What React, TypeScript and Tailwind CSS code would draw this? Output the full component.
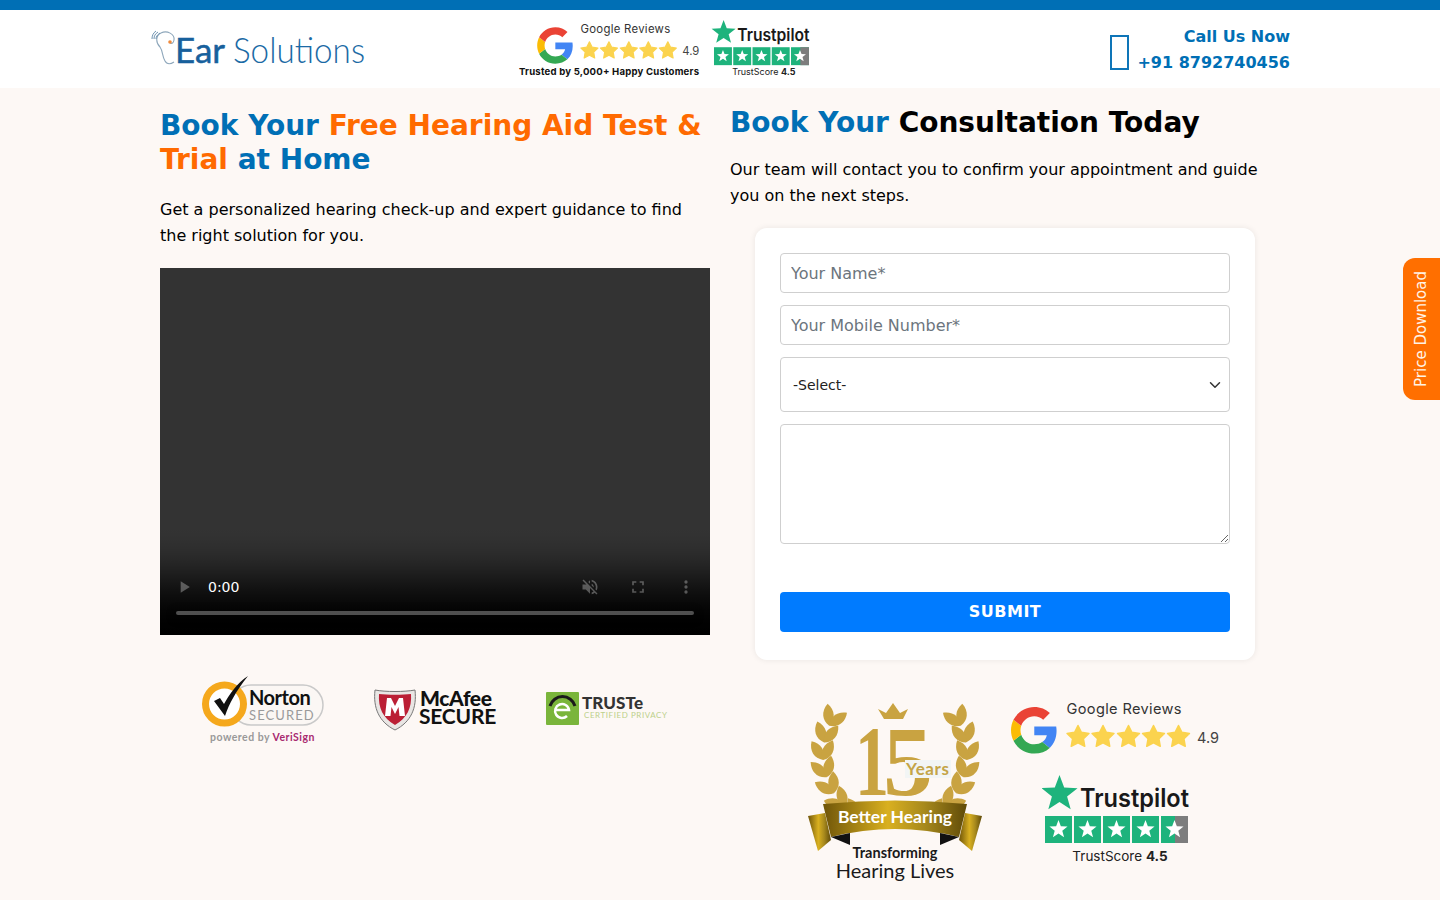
import { ChevronDown } from "lucide-react";

const star = (cx: number, cy: number, r: number, inner = 0.42) => {
  const pts: string[] = [];
  for (let i = 0; i < 10; i++) {
    const rad = i % 2 === 0 ? r : r * inner;
    const a = -Math.PI / 2 + (i * Math.PI) / 5;
    pts.push(`${(cx + rad * Math.cos(a)).toFixed(2)},${(cy + rad * Math.sin(a)).toFixed(2)}`);
  }
  return pts.join(" ");
};

function GoogleMark() {
  return (
    <g fontFamily="Inter, 'Open Sans', sans-serif">
      <g transform="translate(6,12) scale(0.97)">
        <path fill="#4285F4" d="M46.98 24.55c0-1.57-.15-3.09-.38-4.55H24v9.02h12.94c-.58 2.96-2.26 5.48-4.78 7.18l7.73 6c4.51-4.18 7.09-10.36 7.09-17.65z" />
        <path fill="#34A853" d="M24 48c6.48 0 11.93-2.13 15.89-5.81l-7.73-6c-2.15 1.45-4.92 2.3-8.16 2.3-6.26 0-11.57-4.22-13.47-9.91l-7.98 6.19C6.51 42.62 14.62 48 24 48z" />
        <path fill="#FBBC05" d="M10.53 28.59c-.48-1.45-.76-2.99-.76-4.59s.27-3.14.76-4.59l-7.98-6.19C.92 16.46 0 20.12 0 24s.92 7.54 2.56 10.78l7.97-6.19z" />
        <path fill="#EA4335" d="M24 9.5c3.54 0 6.71 1.22 9.21 3.6l6.85-6.85C35.9 2.38 30.47 0 24 0 14.62 0 6.51 5.38 2.56 13.22l7.98 6.19C12.43 13.72 17.74 9.5 24 9.5z" />
      </g>
      <text x="61.500" y="19" fontSize="14.600" fill="#333" textLength="115">Google Reviews</text>
      {[73, 98, 123.5, 148.5, 173.5].map((x) => (
        <polygon key={x} points={star(x, 42, 11.5, 0.5)} fill="#fbd34e" stroke="#fbd34e" strokeWidth="1.500" strokeLinejoin="round" />
      ))}
      <text x="192" y="47.500" fontSize="14.500" fill="#444">4.9</text>
    </g>
  );
}

function TrustMark({ scoreY = 86 }: { scoreY?: number }) {
  return (
    <g fontFamily="Inter, sans-serif">
      <polygon points={star(17.5, 19, 19)} fill="#1eb37c" />
      <text x="38" y="32" fontSize="25.500" fontWeight="600" textLength="109" lengthAdjust="spacingAndGlyphs" fill="#191919">Trustpilot</text>
      {[3, 32, 61, 90, 119].map((x, i) => (
        <g key={x}>
          <rect x={x} y="41" width="27" height="27" fill="#1eb37c" />
          {i === 4 && <rect x={x + 14} y="41" width="13" height="27" fill="#7d7d7d" />}
          <polygon points={star(x + 13.5, 54.5, 9.5)} fill="#fff" />
        </g>
      ))}
      <text x="78" y={scoreY} textAnchor="middle" fontSize="13.500" fill="#222">
        TrustScore <tspan fontWeight="700">4.5</tspan>
      </text>
    </g>
  );
}

function Logo() {
  return (
    <svg viewBox="0 0 232 48" className="h-[48px] w-[232px] shrink-0" fontFamily="Lato, sans-serif">
      <g transform="translate(0,4)">
        <path d="M11 4 C5 7 6 14 10 18 C13 22 12 27 15 32 C17 36 21 35 24 33" fill="none" stroke="#8ea7bb" strokeWidth="1.100" />
        <path d="M11 4 C17 1 25 5 24 11 C23.500 14 22 15 20 14" fill="none" stroke="#8ea7bb" strokeWidth="1.100" />
        <path d="M8 3 C5 5 4 7 4 10 M6 2 C3 4 2 7 2 10 M10 4 C7 6 6 8 6 10" fill="none" stroke="#6f93b0" strokeWidth="1" />
        <circle cx="20" cy="13" r="1.800" fill="#f08a3c" />
        <text x="25" y="34" fontSize="35" fill="#17609c" fontWeight="400" textLength="50" lengthAdjust="spacingAndGlyphs" stroke="#17609c" strokeWidth="0.5">Ear</text>
        <text x="83" y="34" fontSize="35" fill="#1b6aa5" fontWeight="300" textLength="132" lengthAdjust="spacingAndGlyphs">Solutions</text>
      </g>
    </svg>
  );
}

function Norton() {
  return (
    <svg viewBox="0 0 125 72" className="h-[72px] w-[125px]" fontFamily="Lato, sans-serif">
      <rect x="30" y="12" width="92" height="40" rx="20" fill="#fbf7f4" stroke="#c9c9c9" strokeWidth="1.500" />
      <circle cx="23.500" cy="31" r="19" fill="#fff" stroke="#f5a81c" strokeWidth="7" />
      <path d="M13 28 L24 43 C28 31 35 18 47 3 C36 10 28 22 23 31 L19 25 Z" fill="#111" />
      <text x="48" y="32" fontSize="20" fontWeight="700" fill="#111" letterSpacing="-0.5">Norton</text>
      <text x="48" y="46.500" fontSize="13" fill="#9a9a9a" letterSpacing="1.100">SECURED</text>
      <text x="9" y="68" fontSize="10.500" fontWeight="700" fill="#999" letterSpacing="0.5">
        powered by <tspan fill="#a8296f">VeriSign</tspan>
      </text>
    </svg>
  );
}

function McAfee() {
  return (
    <svg viewBox="0 0 125 46" className="h-[46px] w-[125px]" fontFamily="Lato, sans-serif">
      <path d="M2 4 C12 6 32 6 42 4 C44 22 38 36 22 44 C6 36 0 22 2 4 Z" fill="#e9e6e4" stroke="#777" strokeWidth="1" />
      <path d="M6 8 C14 9 30 9 38 8 C39 22 34 32 22 39 C10 32 5 22 6 8 Z" fill="#bb1f35" />
      <path d="M12 30 L14 12 L18 12 L22 20 L26 12 L30 12 L32 30 L26.500 30 L25.500 21 L22 28 L18.500 21 L17.500 30 Z" fill="#fff" />
      <text x="47" y="20" fontSize="21" fontWeight="900" fill="#111" letterSpacing="-0.4">McAfee</text>
      <text x="46" y="38" fontSize="21" fontWeight="700" fill="#111" letterSpacing="-0.2">SECURE</text>
    </svg>
  );
}

function Truste() {
  return (
    <svg viewBox="0 0 125 36" className="h-[36px] w-[125px]" fontFamily="Lato, sans-serif">
      <rect x="1" y="1" width="33" height="33" rx="1" fill="#7ab53b" />
      <path d="M5 15 A13 13 0 0 1 30 15" fill="none" stroke="#1a1a1a" strokeWidth="3" />
      <path d="M11 19 H24 A7 7 0 1 0 22 25" fill="none" stroke="#fff" strokeWidth="2.500" />
      <text x="37" y="18" fontSize="17" fontWeight="900" fill="#333" textLength="61">TRUSTe</text>
      <text x="39" y="27" fontSize="8" fill="#bcd08a" textLength="83">CERTIFIED PRIVACY</text>
    </svg>
  );
}

const LEAF = "M0 0 C6 -7 15 -7 22 0 C15 7 6 7 0 0 Z";
const nodes = [66, 80, 94, 108, 122, 136, 150];

function Wreath() {
  return (
    <>
      {nodes.map((t) => {
        const r = (t * Math.PI) / 180;
        const x = 100 - 72 * Math.sin(r);
        const y = 65 - 72 * Math.cos(r);
        return (
          <g key={t}>
            <path transform={`translate(${x.toFixed(1)},${y.toFixed(1)}) rotate(${-t - 28})`} d={LEAF} fill="#c9a341" />
            <path transform={`translate(${x.toFixed(1)},${y.toFixed(1)}) rotate(${-t + 30})`} d={LEAF} fill="#c9a341" />
          </g>
        );
      })}
    </>
  );
}

function Badge() {
  return (
    <svg viewBox="0 0 200 200" className="h-[200px] w-[200px] shrink-0" fontFamily="Lato, sans-serif">
      <defs>
        <linearGradient id="band" x1="0" y1="0" x2="1" y2="0">
          <stop offset="0" stopColor="#6f5509" />
          <stop offset="0.45" stopColor="#d9b020" />
          <stop offset="0.7" stopColor="#a88a1d" />
          <stop offset="1" stopColor="#5f4a08" />
        </linearGradient>
      </defs>
      <Wreath />
      <g transform="translate(200,0) scale(-1,1)"><Wreath /></g>
      <path d="M83 19 L89 29 H108 L113 19 L105 23 L98 13 L91 23 Z" fill="#c9a341" />
      <text x="60" y="105" fontSize="100" fontWeight="700" fill="#c9a341" fontFamily="'Liberation Serif', serif" textLength="34" lengthAdjust="spacingAndGlyphs">1</text>
      <text x="88" y="105" fontSize="100" fontWeight="700" fill="#c9a341" fontFamily="'Liberation Serif', serif">5</text>
      <rect x="110" y="70" width="46" height="18" fill="#f2f5f5" />
      <text x="111" y="85" fontSize="17" fontWeight="700" fill="#c4a448" textLength="43">Years</text>
      <path d="M13 126 L30 123 L36 150 L23 161 Z" fill="url(#band)" />
      <path d="M187 126 L170 123 L164 150 L177 161 Z" fill="url(#band)" />
      <path d="M28 114 Q100 107 172 114 L164 147 Q100 131 36 147 Z" fill="url(#band)" />
      <path d="M36 147 L55 155 L55 143 Z" fill="#111" />
      <path d="M164 147 L145 155 L145 143 Z" fill="#111" />
      <text x="100" y="133" textAnchor="middle" fontSize="17.500" fontWeight="700" fill="#fff">Better Hearing</text>
      <text x="100" y="168" textAnchor="middle" fontSize="14.500" fontWeight="700" fill="#1a1a1a">Transforming</text>
      <text x="100" y="188" textAnchor="middle" fontSize="20" fill="#1a1a1a">Hearing Lives</text>
    </svg>
  );
}

function Field({ placeholder }: { placeholder: string }) {
  return (
    <input
      placeholder={placeholder}
      className="h-10 w-full rounded border border-[#cfcfcf] bg-white px-2.5 text-base outline-none placeholder:text-[#6c757d]"
    />
  );
}

export default function App() {
  return (
    <div className="min-h-[900px] bg-[#fdf8f5] font-['DejaVu_Sans',sans-serif] text-black">
      <div className="h-[10px] bg-[#006fb5]" />
      <header className="bg-white">
        <div className="mx-auto flex h-[78px] w-[1140px] items-center">
          <div className="w-[368px] shrink-0"><Logo /></div>
          <svg viewBox="0 0 296 64" className="h-[64px] w-[296px] shrink-0" aria-label="Reviews">
            <g transform="translate(14.5,1) scale(0.78)"><GoogleMark /></g>
            <text x="1" y="58" fontSize="9.600" fontWeight="700" fill="#111" fontFamily="Inter, sans-serif" textLength="180">Trusted by 5,000+ Happy Customers</text>
            <g transform="translate(194,3) scale(0.664)"><TrustMark scoreY={83} /></g>
          </svg>
          <div className="ml-auto flex items-center gap-2">
            <div className="mt-[7px] h-[35px] w-[19px] border-2 border-[#0e75b8]" />
            <div className="text-right text-base font-bold leading-[26px] text-[#006fb5]">
              <div className="mt-[1px]">Call Us Now</div>
              <div>+91 8792740456</div>
            </div>
          </div>
        </div>
      </header>

      <main className="mx-auto grid w-[1120px] grid-cols-[550px_550px] gap-x-5">
        <section>
          <h1 className="mt-[21px] text-[28px] font-bold leading-[34px] text-[#ff6a00]">
            <span className="text-[#006fb5]">Book Your </span>Free Hearing Aid Test &amp; Trial <span className="text-[#006fb5]">at Home</span>
          </h1>
          <p className="mt-5 text-base leading-[26px]">
            Get a personalized hearing check-up and expert guidance to find the right solution for you.
          </p>
          <video controls muted className="mt-[19px] h-[367px] w-[550px] bg-black [&::-webkit-media-controls-current-time-display]:font-['DejaVu_Sans']" />
          <div className="mt-[38px] flex items-center justify-center gap-[47px]">
            <Norton />
            <McAfee />
            <Truste />
          </div>
        </section>

        <section>
          <h2 className="mt-[18px] text-[28px] font-bold leading-[34px]">
            <span className="text-[#006fb5]">Book Your </span>Consultation Today
          </h2>
          <p className="mt-[17px] text-base leading-[26px]">
            Our team will contact you to confirm your appointment and guide you on the next steps.
          </p>
          <form className="mx-auto mt-[19px] flex w-[500px] flex-col gap-3 rounded-xl bg-white px-[25px] pb-[28px] pt-[25px] shadow-[0_0_6px_rgba(0,0,0,0.08)]">
            <Field placeholder="Your Name*" />
            <Field placeholder="Your Mobile Number*" />
            <div className="relative">
              <select className="h-[55px] w-full appearance-none rounded border border-[#cfcfcf] bg-white px-3 text-sm text-[#222] outline-none">
                <option>-Select-</option>
              </select>
              <ChevronDown className="absolute right-[6px] top-[19px] h-[18px] w-[18px] text-[#333]" />
            </div>
            <textarea className="h-[120px] w-full rounded border border-[#cfcfcf] bg-white px-2.5 py-2 outline-none" />
            <button type="button" className="mt-9 h-10 w-full rounded bg-[#007bff] text-base font-bold tracking-[0.5px] text-white">
              SUBMIT
            </button>
          </form>
          <div className="ml-[65px] mt-[30px] flex">
            <Badge />
            <div className="ml-[10px] flex w-[230px] flex-col items-center pt-[5px]">
              <svg viewBox="0 0 230 64" className="h-[64px] w-[230px]"><GoogleMark /></svg>
              <svg viewBox="0 0 160 92" className="ml-[4px] mt-[16px] h-[92px] w-[160px]"><TrustMark /></svg>
            </div>
          </div>
        </section>
      </main>

      <a className="fixed right-0 top-[258px] flex h-[142px] w-[37px] items-center justify-center rounded-l-xl bg-[#ff6f00] text-[15px] text-[#fff3e6]">
        <span className="rotate-180 [writing-mode:vertical-rl]">Price Download</span>
      </a>
    </div>
  );
}
